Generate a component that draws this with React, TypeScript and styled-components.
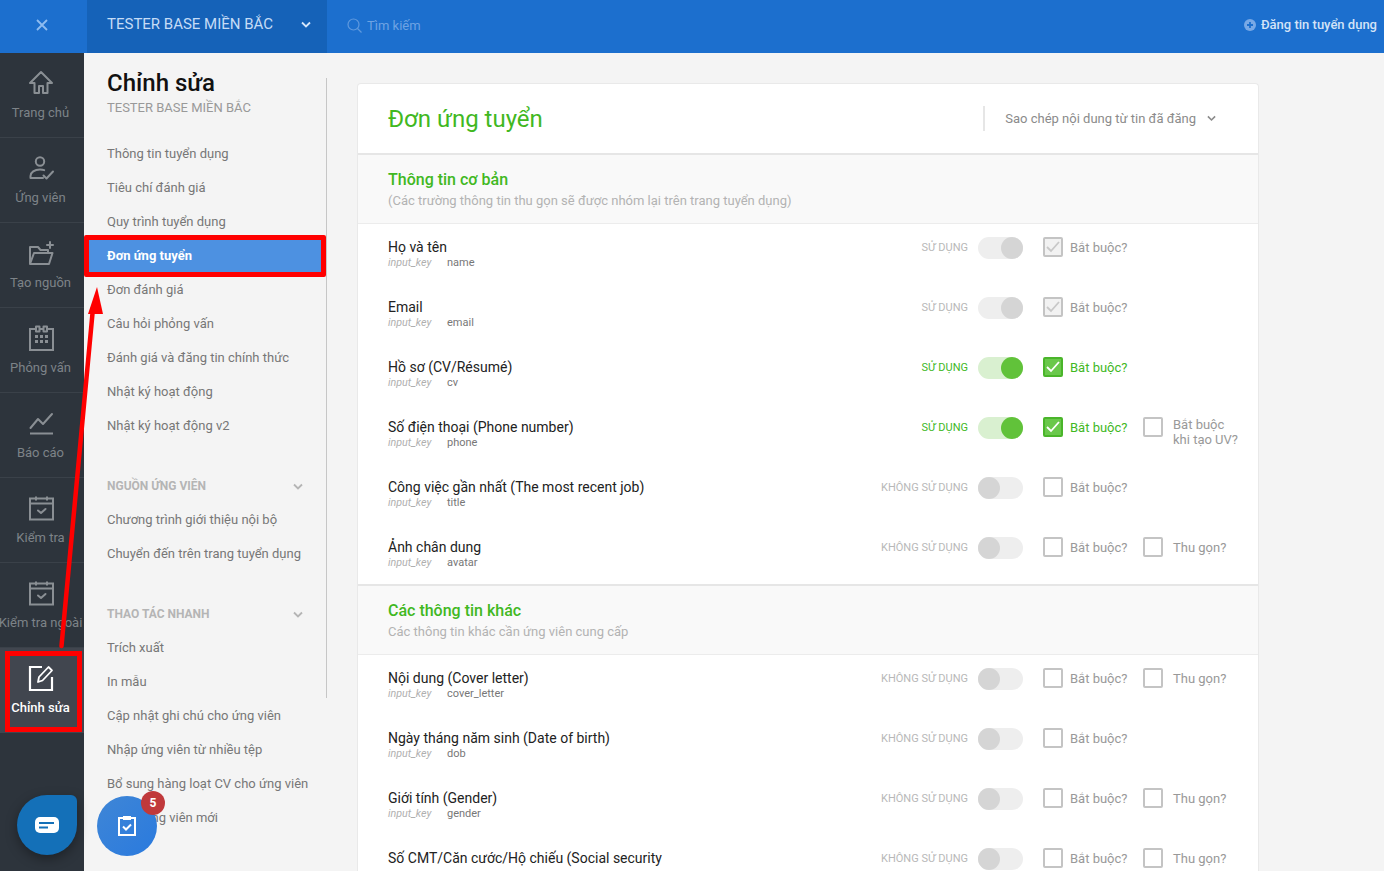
import React from "react";
import styled, { createGlobalStyle } from "styled-components";

const Global = createGlobalStyle`
  html, body { margin: 0; padding: 0; height: 100%; overflow: hidden; }
  body { font-family: Roboto, "Noto Sans", sans-serif; font-size: 13px; background: #f4f4f4; }
  * { box-sizing: border-box; }
`;

const Page = styled.div`display: flex; flex-direction: column; height: 871px; overflow: hidden; position: relative;`;
const TopBar = styled.header`display: flex; align-items: center; height: 53px; flex: none; background: #1c6fce;`;
const CloseCell = styled.div`width: 87px; display: flex; justify-content: center; align-items: center; padding: 0 4px 4px 0; height: 100%;`;
const TeamCell = styled.div`width: 240px; height: 100%; background: #1562b8; display: flex; align-items: center; justify-content: space-between; padding: 0 16px 5px 20px; color: #c5dcf6; font-size: 15px;`;
const Search = styled.div`display: flex; align-items: center; gap: 5px; margin-left: 20px; color: #6ea3e3; font-size: 13px; padding-bottom: 3px; flex: 1;`;
const PostLink = styled.div`display: flex; align-items: center; gap: 5px; margin-right: 7px; color: #d3e3f7; font-size: 13px; font-weight: 500; padding-bottom: 4px;`;

const Body = styled.div`display: flex; flex: 1; min-height: 0;`;
const Rail = styled.nav`width: 84px; flex: none; background: #2d343c; overflow: hidden;`;
const RailItem = styled.div<{ $active?: boolean }>`
  position: relative; height: 85px; display: flex; flex-direction: column; align-items: center; padding: 16px 3px 0 0; gap: 7px;
  border-bottom: 1px solid ${p => (p.$active ? "#41464f" : "#3a4149")};
  background: ${p => (p.$active ? "#41464f" : "transparent")};
  color: ${p => (p.$active ? "#ffffff" : "#7d8388")};
  font-weight: ${p => (p.$active ? 500 : 400)};
  svg { display: block; flex: none; }
`;
const RailLabel = styled.span`font-size: 13px; line-height: 18px; white-space: nowrap;`;
const RailMark = styled.div`position: absolute; top: 3px; left: 5px; right: 2px; bottom: 0; border: 5px solid #ff0000;`;

const Sidebar = styled.aside`position: relative; width: 243px; flex: none; padding: 15px 0 0; background: #f4f4f4; overflow: hidden;`;
const ScrollThumb = styled.div`position: absolute; top: 25px; right: 0; width: 1.5px; height: 620px; background: #c6c6c6;`;
const SideTitle = styled.h1`margin: 0 0 0 23px; font-size: 24px; line-height: 30px; font-weight: 500; color: #111;`;
const SideSub = styled.div`margin: 1px 0 0 23px; font-size: 13px; line-height: 18px; color: #999;`;
const NavList = styled.div`display: flex; flex-direction: column; margin-top: 20px;`;
const NavItem = styled.div<{ $active?: boolean; $spaced?: boolean }>`
  position: relative; height: 34px; line-height: 34px; padding-left: 23px; margin-right: 1px; white-space: nowrap; font-size: 13px;
  margin-top: ${p => (p.$spaced ? "26px" : "0")};
  color: ${p => (p.$active ? "#fff" : "#777")};
  font-weight: ${p => (p.$active ? 700 : 400)};
  background: ${p => (p.$active ? "#4d91e1" : "transparent")};
`;
const NavMark = styled.div`position: absolute; top: -4px; bottom: -4px; left: 0; right: 0; border: 5px solid #ff0000; border-radius: 2px;`;
const GroupHead = styled.div`display: flex; align-items: center; justify-content: space-between; height: 34px; margin-top: 26px; padding: 0 24px 0 23px; font-size: 12px; font-weight: 700; color: #b5b5b5;`;

const Main = styled.main`flex: 1; min-width: 0; padding: 30px 125px 0 30px; overflow: hidden;`;
const Card = styled.section`background: #fff; border: 1px solid #e9e9e9; border-bottom: 0; border-radius: 4px 4px 0 0;`;
const CardHead = styled.div`display: flex; align-items: center; justify-content: space-between; height: 69px; padding: 0 42px 0 30px;`;
const CardTitle = styled.h2`margin: 0; font-size: 24px; font-weight: 400; color: #41b81f;`;
const CopySelect = styled.div`display: flex; align-items: center; gap: 11px; height: 25px; padding-left: 20px; border-left: 2px solid #e6e6e6; color: #8b8b8b; font-size: 13px;`;
const SectionHead = styled.div`height: 71px; padding: 14px 30px 0; background: #f9f9f9; border-top: 2px solid #e6e6e6; border-bottom: 1px solid #ececec;`;
const SectionTitle = styled.div`font-size: 16px; line-height: 22px; font-weight: 500; color: #41b81f;`;
const SectionSub = styled.div`font-size: 13px; line-height: 20px; color: #b3b3b3;`;

const Row = styled.div`display: grid; grid-template-columns: minmax(0, 1fr) auto 65px 100px 115px; align-items: start; height: 60px; padding: 13px 0 0 30px;`;
const FieldName = styled.div`max-width: 300px; font-size: 14px; line-height: 20px; color: #222;`;
const FieldKey = styled.div`display: flex; font-size: 11px; line-height: 12px; color: #777;`;
const KeyTag = styled.span`width: 59px; flex: none; font-size: 10.700px; font-style: italic; color: #b0b0b0;`;
const Status = styled.div<{ $on?: boolean }>`font-size: 11px; line-height: 20px; margin: 1px 10px 0 0; text-align: right; color: ${p => (p.$on ? "#41b81f" : "#b8b8b8")};`;
const Track = styled.div<{ $on?: boolean; $locked?: boolean }>`
  display: flex; width: 45px; height: 22px; border-radius: 11px;
  justify-content: ${p => (p.$on || p.$locked ? "flex-end" : "flex-start")};
  background: ${p => (p.$on ? "#d9f0d0" : "#eeeeee")};
`;
const Knob = styled.div<{ $on?: boolean }>`width: 22px; height: 22px; border-radius: 50%; background: ${p => (p.$on ? "#61c23a" : "#d5d5d5")};`;
const CheckWrap = styled.div`display: flex; align-items: flex-start; gap: 7px;`;
const Box = styled.div<{ $on?: boolean; $locked?: boolean }>`
  width: 20px; height: 20px; flex: none; border-radius: 2px; display: flex; align-items: center; justify-content: center;
  border: 2px solid ${p => (p.$on ? "#4ab52a" : "#c4c4c4")};
  background: ${p => (p.$on ? "#6ac84b" : p.$locked ? "#f2f2f2" : "#fff")};
`;
const CheckText = styled.span<{ $on?: boolean }>`font-size: 13px; line-height: 20px; margin-top: 1px; white-space: nowrap; color: ${p => (p.$on ? "#41b81f" : "#999")};`;
const ExtraText = styled(CheckText)`margin-left: 3px;`;
const ExtraTwoLine = styled(ExtraText)`line-height: 15px; margin-top: 0; white-space: pre-line;`;

const ChatBubble = styled.div`position: absolute; left: 17px; top: 795px; width: 60px; height: 60px; background: #1470b8; border-radius: 30px 6px 30px 30px; box-shadow: 0 4px 12px rgba(0,0,0,.35); display: flex; align-items: center; justify-content: center;`;
const TaskBubble = styled.div`position: absolute; left: 97px; top: 796px; width: 60px; height: 60px; border-radius: 50%; background: linear-gradient(135deg, #3f86d6, #2a7ade); display: flex; align-items: center; justify-content: center;`;
const Badge = styled.div`position: absolute; top: -5px; right: -8px; width: 24px; height: 24px; border-radius: 50%; background: #c0393b; color: #fff; font-size: 12px; font-weight: 700; display: flex; align-items: center; justify-content: center;`;
const ArrowLayer = styled.svg`position: absolute; left: 50px; top: 280px; pointer-events: none;`;

const s = { fill: "none", stroke: "#8a8f94", strokeWidth: 2, strokeLinejoin: "round" as const, strokeLinecap: "round" as const };

const HomeIcon = () => (
  <svg width="28" height="28" viewBox="0 0 28 28"><path {...s} d="M14 3 3 14h4.500v10H12v-7h4v7h4.500V14H25Z" /></svg>
);
const UserIcon = () => (
  <svg width="28" height="28" viewBox="0 0 28 28"><circle {...s} cx="13" cy="7.500" r="4.200" /><path {...s} d="M16 24H3.500v-2c0-3.500 4-6.500 9.500-6.500 1.500 0 3 .2 4.200.7M16.500 21.500l3 3 6.500-7" /></svg>
);
const FolderIcon = () => (
  <svg width="28" height="28" viewBox="0 0 28 28"><path {...s} d="M3 25V8h8l2.500 3H21v3M3 25l4-11h18.500L22 25ZM23 3v6M20 6h6" /></svg>
);
const GridCalIcon = () => (
  <svg width="28" height="28" viewBox="0 0 28 28">
    <path {...s} strokeLinejoin="miter" d="M8 5H3v21h23V5h-5M13 5h3" />
    <rect {...s} x="9" y="2.500" width="3.500" height="5" /><rect {...s} x="16.500" y="2.500" width="3.500" height="5" />
    <path fill="#8a8f94" d="M8 11h3v3H8zM13 11h3v3h-3zM18 11h3v3h-3zM8 16h3v3H8zM13 16h3v3h-3zM18 16h3v3h-3z" />
  </svg>
);
const ChartIcon = () => (
  <svg width="28" height="28" viewBox="0 0 28 28"><path {...s} d="M3.500 19 11 10l5 5 9-10" /><path {...s} strokeLinecap="butt" d="M3 24.500h23" /></svg>
);
const CheckCalIcon = () => (
  <svg width="28" height="28" viewBox="0 0 28 28"><path {...s} strokeLinejoin="miter" strokeLinecap="butt" d="M3 4.500h23v21H3ZM3 9.500h23M9 2.500v4M20 2.500v4" /><path {...s} d="m11 16.500 3 2.500 4.500-4" /></svg>
);
const EditIcon = () => (
  <svg width="28" height="28" viewBox="0 0 28 28"><path fill="none" stroke="#fff" strokeWidth="2.200" d="M15 3H3v23h22V13" /><path fill="none" stroke="#fff" strokeWidth="1.800" strokeLinejoin="round" d="m11 18 1-5L21.500 3l3.500 3.500-9.500 10Z" /></svg>
);
const Chevron = ({ color, w = 10 }: { color: string; w?: number }) => (
  <svg width={w} height={w * 0.7} viewBox="0 0 10 7"><path d="m1 1.500 4 4 4-4" fill="none" stroke={color} strokeWidth="1.800" /></svg>
);
const Tick = ({ color }: { color: string }) => (
  <svg width="14" height="12" viewBox="0 0 14 12"><path d="m1 6 4 4 8-9" fill="none" stroke={color} strokeWidth="1.800" /></svg>
);

type Field = { name: string; key: string; on?: boolean; locked?: boolean; req?: boolean; extra?: string };
const basic: Field[] = [
  { name: "Họ và tên", key: "name", locked: true, req: true },
  { name: "Email", key: "email", locked: true, req: true },
  { name: "Hồ sơ (CV/Résumé)", key: "cv", on: true, req: true },
  { name: "Số điện thoại (Phone number)", key: "phone", on: true, req: true, extra: "Bắt buộc\nkhi tạo UV?" },
  { name: "Công việc gần nhất (The most recent job)", key: "title" },
  { name: "Ảnh chân dung", key: "avatar", extra: "Thu gọn?" },
];
const others: Field[] = [
  { name: "Nội dung (Cover letter)", key: "cover_letter", extra: "Thu gọn?" },
  { name: "Ngày tháng năm sinh (Date of birth)", key: "dob" },
  { name: "Giới tính (Gender)", key: "gender", extra: "Thu gọn?" },
  { name: "Số CMT/Căn cước/Hộ chiếu (Social security number/Passport)", key: "id_number", extra: "Thu gọn?" },
];

const FieldRow = ({ f }: { f: Field }) => (
  <Row>
    <div>
      <FieldName>{f.name}</FieldName>
      <FieldKey><KeyTag>input_key</KeyTag>{f.key}</FieldKey>
    </div>
    <Status $on={f.on}>{f.on || f.locked ? "SỬ DỤNG" : "KHÔNG SỬ DỤNG"}</Status>
    <Track $on={f.on} $locked={f.locked}><Knob $on={f.on} /></Track>
    <CheckWrap>
      <Box $on={f.on} $locked={f.locked}>
        {f.on && <Tick color="#fff" />}
        {f.locked && <Tick color="#c8c8c8" />}
      </Box>
      <CheckText $on={f.on}>Bắt buộc?</CheckText>
    </CheckWrap>
    {f.extra ? (
      <CheckWrap>
        <Box />
        {f.extra.includes("\n") ? <ExtraTwoLine>{f.extra}</ExtraTwoLine> : <ExtraText>{f.extra}</ExtraText>}
      </CheckWrap>
    ) : <div />}
  </Row>
);

const railItems = [
  { label: "Trang chủ", icon: <HomeIcon /> },
  { label: "Ứng viên", icon: <UserIcon /> },
  { label: "Tạo nguồn", icon: <FolderIcon /> },
  { label: "Phỏng vấn", icon: <GridCalIcon /> },
  { label: "Báo cáo", icon: <ChartIcon /> },
  { label: "Kiểm tra", icon: <CheckCalIcon /> },
  { label: "Kiểm tra ngoài", icon: <CheckCalIcon /> },
];

const mainNav = ["Thông tin tuyển dụng", "Tiêu chí đánh giá", "Quy trình tuyển dụng", "Đơn ứng tuyển", "Đơn đánh giá", "Câu hỏi phỏng vấn", "Đánh giá và đăng tin chính thức", "Nhật ký hoạt động", "Nhật ký hoạt động v2"];
const sourceNav = ["Chương trình giới thiệu nội bộ", "Chuyển đến trên trang tuyển dụng"];
const quickNav = ["Trích xuất", "In mẫu", "Cập nhật ghi chú cho ứng viên", "Nhập ứng viên từ nhiều tệp", "Bổ sung hàng loạt CV cho ứng viên", "Thêm ứng viên mới"];

export default function App() {
  return (
    <Page>
      <Global />
      <TopBar>
        <CloseCell>
          <svg width="14" height="14" viewBox="0 0 14 14"><path d="m2 2 10 10M12 2 2 12" stroke="#8fbcf0" strokeWidth="1.800" /></svg>
        </CloseCell>
        <TeamCell>TESTER BASE MIỀN BẮC<Chevron color="#d5e6fa" /></TeamCell>
        <Search>
          <svg width="15" height="15" viewBox="0 0 15 15"><circle cx="6.500" cy="6.500" r="5.500" fill="none" stroke="#5f99de" strokeWidth="1.200" /><path d="m10.500 10.500 4 4" stroke="#5f99de" strokeWidth="1.200" /></svg>
          Tìm kiếm
        </Search>
        <PostLink>
          <svg width="12" height="12" viewBox="0 0 12 12"><circle cx="6" cy="6" r="6" fill="#79a9e6" /><path d="M6 3v6M3 6h6" stroke="#1c6fce" strokeWidth="1.800" /></svg>
          Đăng tin tuyển dụng
        </PostLink>
      </TopBar>
      <Body>
        <Rail>
          {railItems.map(r => (
            <RailItem key={r.label}>{r.icon}<RailLabel>{r.label}</RailLabel></RailItem>
          ))}
          <RailItem $active><EditIcon /><RailLabel>Chỉnh sửa</RailLabel><RailMark /></RailItem>
        </Rail>
        <Sidebar>
          <ScrollThumb />
          <SideTitle>Chỉnh sửa</SideTitle>
          <SideSub>TESTER BASE MIỀN BẮC</SideSub>
          <NavList>
            {mainNav.map(n => (
              <NavItem key={n} $active={n === "Đơn ứng tuyển"}>{n}{n === "Đơn ứng tuyển" && <NavMark />}</NavItem>
            ))}
            <GroupHead>NGUỒN ỨNG VIÊN<Chevron color="#b5b5b5" /></GroupHead>
            {sourceNav.map(n => <NavItem key={n}>{n}</NavItem>)}
            <GroupHead>THAO TÁC NHANH<Chevron color="#b5b5b5" /></GroupHead>
            {quickNav.map(n => <NavItem key={n}>{n}</NavItem>)}
            <NavItem $spaced>Tiếp nhận và đăng tin tuyển</NavItem>
          </NavList>
        </Sidebar>
        <Main>
          <Card>
            <CardHead>
              <CardTitle>Đơn ứng tuyển</CardTitle>
              <CopySelect>Sao chép nội dung từ tin đã đăng<Chevron color="#8b8b8b" w={9} /></CopySelect>
            </CardHead>
            <SectionHead>
              <SectionTitle>Thông tin cơ bản</SectionTitle>
              <SectionSub>(Các trường thông tin thu gọn sẽ được nhóm lại trên trang tuyển dụng)</SectionSub>
            </SectionHead>
            {basic.map(f => <FieldRow key={f.key} f={f} />)}
            <SectionHead>
              <SectionTitle>Các thông tin khác</SectionTitle>
              <SectionSub>Các thông tin khác cần ứng viên cung cấp</SectionSub>
            </SectionHead>
            {others.map(f => <FieldRow key={f.key} f={f} />)}
          </Card>
        </Main>
      </Body>
      <ChatBubble>
        <svg width="24" height="16" viewBox="0 0 24 16"><rect width="24" height="16" rx="5" fill="#fff" /><path d="M4 6h15M4 10.500h9" stroke="#1470b8" strokeWidth="2" /></svg>
      </ChatBubble>
      <TaskBubble>
        <svg width="20" height="22" viewBox="0 0 20 22"><path d="M6 3H2v17h16V3h-4" fill="none" stroke="#fff" strokeWidth="2" /><rect x="6" y="1" width="8" height="4" fill="#fff" /><path d="m6 11.500 3 3 5-5" fill="none" stroke="#fff" strokeWidth="2" /></svg>
        <Badge>5</Badge>
      </TaskBubble>
      <ArrowLayer width="60" height="380" viewBox="0 0 60 380">
        <path d="M11.500 366 43 28" stroke="#ff0000" strokeWidth="4.500" strokeLinecap="round" />
        <path d="M47 7 38 34h15Z" fill="#ff0000" />
      </ArrowLayer>
    </Page>
  );
}
